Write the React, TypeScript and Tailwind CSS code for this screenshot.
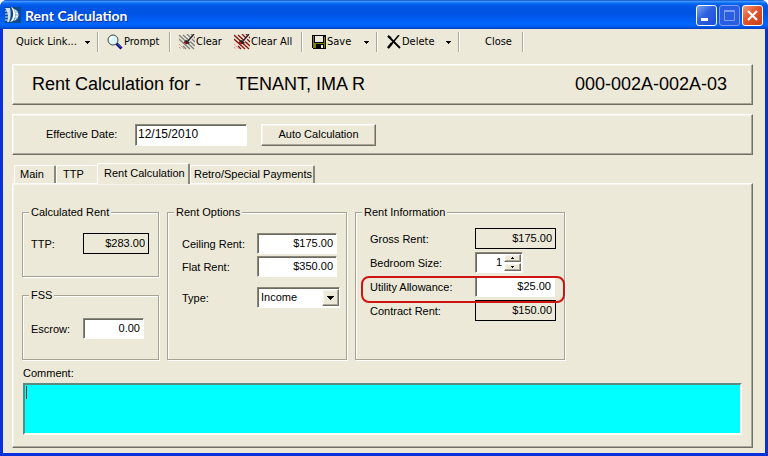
import React from "react";

const sunken =
  "border border-t-[#8a887a] border-l-[#8a887a] border-r-white border-b-white bg-white shadow-[inset_1px_1px_0_#6b6a5e] text-black outline-none";
const raisedPanel =
  "border border-t-white border-l-white border-r-[#716f64] border-b-[#716f64] shadow-[inset_-1px_-1px_0_#aca899,inset_1px_1px_0_#f6f4ea]";

function Separator() {
  return <span className="h-5 w-[2px] shrink-0 border-l border-l-[#aca899] bg-white" />;
}

function DownArrow() {
  return (
    <svg width="5" height="3" viewBox="0 0 5 3" shapeRendering="crispEdges" aria-hidden="true">
      <path d="M0 0h5v1h-1v1h-1v1h-1v-1h-1v-1h-1z" fill="#000" />
    </svg>
  );
}

function AppIcon() {
  return (
    <svg width="16" height="16" viewBox="0 0 16 16" aria-hidden="true">
      <rect width="16" height="16" fill="#0d4a8c" />
      <path d="M0 1h5c1 4 1 10-1 14H2C4 10 3 5 0 1z" fill="#cfe4f2" />
      <path d="M0 4h3M0 7h4M0 10h4M0 13h3" stroke="#cfe4f2" />
      <path d="M6 0c3 4 3 11-1 15l3-1c3-4 3-9 0-13z" fill="#fff" />
      <path d="M9 2c6 2 6 9 0 12 2-4 2-8 0-12z" fill="#e8f6ff" />
      <path d="M10 5h3M10 8h4M10 11h3" stroke="#7fa9cc" />
    </svg>
  );
}

function PromptIcon() {
  return (
    <svg width="16" height="16" viewBox="0 0 16 16" aria-hidden="true">
      <path d="M9.500 9.500l5 5" stroke="#000080" strokeWidth="3" />
      <path d="M10 9.500l4 4" stroke="#5c7fd8" strokeWidth="1" />
      <circle cx="6" cy="6" r="5" fill="#d9f6fa" stroke="#444" />
      <path d="M3 6c0-2 1-3 3-3" stroke="#fff" strokeWidth="1.500" fill="none" />
    </svg>
  );
}

function ClearIcon({ color }: { color: string }) {
  return (
    <svg width="16" height="16" viewBox="0 0 16 16" aria-hidden="true">
      <g stroke={color} strokeWidth="1.300" fill="none">
        <path d="M0 1l15 14M4 1l12 11M8 0l8 8M12 0l4 4M0 5l11 10M4 12l3 3" />
      </g>
      <path d="M0 10l5 5M0 13l2 2" stroke="#d98c8c" strokeDasharray="2 1" />
      <path d="M15 2l-6 7" stroke="#ddd" strokeWidth="1.500" />
      <path d="M15 0l-6 7" stroke="#222" strokeWidth="1.300" />
      <path d="M5 7l3-1 3 3-2 1z" fill="#222" />
      <path d="M5 8l3 2" stroke="#a00000" strokeWidth="1.500" />
    </svg>
  );
}

function SaveIcon() {
  return (
    <svg width="14" height="14" viewBox="0 0 14 14" shapeRendering="crispEdges" aria-hidden="true">
      <path d="M0 0h14v14h-13l-1-1z" fill="#000" />
      <path d="M1 1h1v12h-1zM12 2h1v11h-1zM2 8h10v1h-10zM2 9h2v4h-2z" fill="#808000" />
      <rect x="3" y="1" width="8" height="6" fill="#ece9d8" />
      <rect x="9" y="10" width="2" height="3" fill="#ece9d8" />
    </svg>
  );
}

function DeleteIcon() {
  return (
    <svg width="14" height="14" viewBox="0 0 14 14" aria-hidden="true">
      <path d="M1 1l4 4 8 8" stroke="#000" strokeWidth="1.800" fill="none" />
      <path d="M1 1l3 2" stroke="#000" strokeWidth="2" />
      <path d="M12 0L7 6 1 13" stroke="#000" strokeWidth="1.500" fill="none" />
      <path d="M5 8l-4 5" stroke="#000" strokeWidth="2.400" />
    </svg>
  );
}

function ToolButton({ icon, label, className = "" }: { icon?: React.ReactNode; label: string; className?: string }) {
  return (
    <button type="button" className={`flex h-5 items-center gap-px whitespace-nowrap ${className}`}>
      {icon}
      <span className="pb-[2px]">{label}</span>
    </button>
  );
}

function MenuArrow({ label, className }: { label: string; className: string }) {
  return (
    <button type="button" aria-label={label} className={`flex h-5 items-center ${className}`}>
      <DownArrow />
    </button>
  );
}

function Group({ title, className = "", children }: { title: string; className?: string; children: React.ReactNode }) {
  return (
    <fieldset
      className={`min-w-0 border border-[#a5a394] shadow-[1px_1px_0_#fff,inset_1px_1px_0_#fff] ${className}`}
    >
      <legend className="relative ml-[6px] bg-[#ece9d8] px-[2px] leading-[13px]">{title}</legend>
      {children}
    </fieldset>
  );
}

function Row({ id, label, labelWidth, children }: { id: string; label: string; labelWidth: string; children: React.ReactNode }) {
  return (
    <div className="flex h-[21px] items-start">
      <label htmlFor={id} className={`shrink-0 whitespace-nowrap pt-[5px] ${labelWidth}`}>
        {label}
      </label>
      {children}
    </div>
  );
}

function ReadOnly({ id, value, width }: { id: string; value: string; width: string }) {
  return (
    <input
      id={id}
      readOnly
      defaultValue={value}
      className={`h-[21px] border border-black bg-[#ece9d8] pr-[3px] pb-px text-right outline-none ${width}`}
    />
  );
}

function Amount({ id, value, width }: { id: string; value: string; width: string }) {
  return <input id={id} defaultValue={value} className={`h-[21px] pr-[3px] pb-px text-right ${sunken} ${width}`} />;
}

const tab =
  "border-t border-l border-white border-r-2 border-r-[#8a887a] bg-[#ece9d8] text-left rounded-t-[2px] whitespace-nowrap";

export default function App() {
  return (
    <div className="flex min-h-screen w-full flex-col overflow-hidden rounded-t-[7px] bg-[#0831d9] font-['Liberation_Sans',Arial,sans-serif] text-[11px] leading-[13px] text-black">
      <header className="flex h-[29px] items-center bg-[linear-gradient(to_bottom,#0a4fd0_0%,#3f95ff_5%,#0a6cf5_11%,#0058e6_20%,#0053e1_45%,#005cf5_65%,#0066ff_85%,#0057e8_93%,#003dc0_100%)] px-[5px]">
        <AppIcon />
        <h1 className="flex-1 pt-[2px] pl-1 font-['Lato','Noto_Sans',sans-serif] text-[14px] leading-5 font-bold text-white [text-shadow:1px_1px_0_#0a2f9c]">
          Rent Calculation
        </h1>
        <div className="flex gap-[2px] pt-[2px]">
          <button
            type="button"
            aria-label="Minimize"
            className="h-[21px] w-[21px] rounded-[3px] border border-white bg-[linear-gradient(135deg,#7ba2f0,#2c5fe0_45%,#1c4fd8)]"
          >
            <svg width="19" height="19" viewBox="0 0 19 19" aria-hidden="true">
              <rect x="4" y="12" width="7" height="3" fill="#fff" />
            </svg>
          </button>
          <button
            type="button"
            aria-label="Maximize"
            disabled
            className="h-[21px] w-[21px] rounded-[3px] border border-[#7f9df0] bg-[#2a5ee2]"
          >
            <svg width="19" height="19" viewBox="0 0 19 19" aria-hidden="true">
              <path d="M4.500 4.500h10v10h-10zM4 5.500h11" stroke="#7f9df0" fill="none" />
            </svg>
          </button>
          <button
            type="button"
            aria-label="Close window"
            className="h-[21px] w-[21px] rounded-[3px] border border-white bg-[linear-gradient(135deg,#f09a80,#e0532c_45%,#c8401c)]"
          >
            <svg width="19" height="19" viewBox="0 0 19 19" aria-hidden="true">
              <path d="M5 5l9 9M14 5l-9 9" stroke="#fff" strokeWidth="2.200" />
            </svg>
          </button>
        </div>
      </header>

      <main className="mx-[3px] mb-[3px] flex flex-1 flex-col bg-[#ece9d8] pr-3 pb-[5px] pl-[9px]">
        <div
          role="toolbar"
          className="flex h-[35px] items-start pt-[3px] font-['DejaVu_Sans_Condensed','DejaVu_Sans',sans-serif] text-[11px]"
        >
          <ToolButton label="Quick Link..." className="w-[73px] pl-1" />
          <MenuArrow label="Quick Link menu" className="w-[12px]" />
          <Separator />
          <ToolButton icon={<PromptIcon />} label="Prompt" className="w-[70px] pl-2" />
          <Separator />
          <ToolButton icon={<ClearIcon color="#808080" />} label="Clear" className="w-[55px] pl-2" />
          <ToolButton icon={<ClearIcon color="#8b1010" />} label="Clear All" className="w-[75px] pl-2" />
          <Separator />
          <ToolButton icon={<SaveIcon />} label="Save" className="w-[61px] pl-[9px]" />
          <MenuArrow label="Save menu" className="w-[12px]" />
          <Separator />
          <ToolButton icon={<DeleteIcon />} label="Delete" className="w-[68px] pl-[9px]" />
          <MenuArrow label="Delete menu" className="w-[12px]" />
          <Separator />
          <ToolButton label="Close" className="w-[62px] pl-[25px]" />
          <Separator />
        </div>

        <section className={`flex h-[41px] items-center pr-[25px] pl-[19px] text-[18px] leading-5 ${raisedPanel}`}>
          <h2 className="w-[204px] pb-[2px]">Rent Calculation for -</h2>
          <span className="flex-1 pb-[2px]">TENANT, IMA R</span>
          <span className="pb-[2px]">000-002A-002A-03</span>
        </section>

        <section className={`mt-[9px] flex h-[41px] items-center pl-[33px] ${raisedPanel}`}>
          <label htmlFor="effective" className="w-[89px]">
            Effective Date:
          </label>
          <input
            id="effective"
            defaultValue="12/15/2010"
            className={`h-[22px] w-[112px] pb-[2px] pl-[2px] text-[12px] ${sunken}`}
          />
          <button type="button" className={`ml-[14px] h-[22px] w-[115px] ${raisedPanel}`}>
            Auto Calculation
          </button>
        </section>

        <div role="tablist" className="mt-2 flex h-5 items-end pl-[2px]">
          <button type="button" role="tab" className={`h-[18px] w-[42px] pl-[5px] ${tab}`}>
            Main
          </button>
          <button type="button" role="tab" className="h-[18px] w-[41px] rounded-t-[2px] border-t border-l border-white pl-[6px] text-left">
            TTP
          </button>
          <button type="button" role="tab" aria-selected="true" className={`relative -mb-px h-[21px] w-[93px] pb-[2px] pl-[6px] ${tab}`}>
            Rent Calculation
          </button>
          <button type="button" role="tab" className={`h-[18px] w-[125px] pl-[3px] ${tab}`}>
            Retro/Special Payments
          </button>
        </div>

        <section className={`flex flex-1 flex-col px-[10px] pt-[22px] pb-3 ${raisedPanel}`}>
          <div className="-ml-px flex gap-2">
            <div className="flex w-[137px] flex-col gap-3">
              <Group title="Calculated Rent" className="h-[71px]">
                <div className="pt-[14px] pl-2">
                  <Row id="ttp" label="TTP:" labelWidth="w-[52px]">
                    <ReadOnly id="ttp" value="$283.00" width="w-[66px]" />
                  </Row>
                </div>
              </Group>
              <Group title="FSS" className="h-[71px]">
                <div className="pt-4 pl-2">
                  <Row id="escrow" label="Escrow:" labelWidth="w-[52px]">
                    <Amount id="escrow" value="0.00" width="w-[61px]" />
                  </Row>
                </div>
              </Group>
            </div>

            <Group title="Rent Options" className="w-[180px]">
              <div className="flex flex-col pt-[14px] pl-[14px]">
                <Row id="ceiling" label="Ceiling Rent:" labelWidth="w-[75px]">
                  <Amount id="ceiling" value="$175.00" width="w-[80px]" />
                </Row>
                <div className="pt-[2px] pb-[10px]">
                  <Row id="flat" label="Flat Rent:" labelWidth="w-[75px]">
                    <Amount id="flat" value="$350.00" width="w-[80px]" />
                  </Row>
                </div>
                <Row id="type" label="Type:" labelWidth="w-[75px]">
                  <div className="relative">
                    <select id="type" defaultValue="Income" className={`h-[21px] w-[83px] appearance-none pl-[3px] ${sunken}`}>
                      <option>Income</option>
                    </select>
                    <span
                      className={`pointer-events-none absolute top-[2px] right-px flex h-[17px] w-[17px] items-center justify-center bg-[#ece9d8] ${raisedPanel}`}
                    >
                      <svg width="7" height="4" viewBox="0 0 7 4" shapeRendering="crispEdges" aria-hidden="true">
                        <path d="M0 0h7v1h-1v1h-1v1h-1v1h-1v-1h-1v-1h-1v-1h-1z" fill="#000" />
                      </svg>
                    </span>
                  </div>
                </Row>
              </div>
            </Group>

            <Group title="Rent Information" className="w-[210px]">
              <div className="flex flex-col gap-[3px] pt-[9px] pl-[14px]">
                <Row id="gross" label="Gross Rent:" labelWidth="w-[105px]">
                  <ReadOnly id="gross" value="$175.00" width="w-[81px]" />
                </Row>
                <Row id="bedrooms" label="Bedroom Size:" labelWidth="w-[105px]">
                  <div className={`flex h-[21px] w-[48px] ${sunken}`}>
                    <input id="bedrooms" defaultValue="1" className="w-[28px] bg-transparent pr-[2px] pb-px text-right outline-none" />
                    <div className="flex w-[17px] flex-col gap-px pt-px">
                      <button type="button" aria-label="More bedrooms" className={`flex h-[8px] items-center justify-center bg-[#ece9d8] ${raisedPanel}`}>
                        <svg width="3" height="2" viewBox="0 0 3 2" shapeRendering="crispEdges" aria-hidden="true">
                          <path d="M1 0h1v1h1v1h-3v-1h1z" />
                        </svg>
                      </button>
                      <button type="button" aria-label="Fewer bedrooms" className={`flex h-[8px] items-center justify-center bg-[#ece9d8] ${raisedPanel}`}>
                        <svg width="3" height="2" viewBox="0 0 3 2" shapeRendering="crispEdges" aria-hidden="true">
                          <path d="M0 0h3v1h-1v1h-1v-1h-1z" />
                        </svg>
                      </button>
                    </div>
                  </div>
                </Row>
                <div className="relative">
                  <Row id="utility" label="Utility Allowance:" labelWidth="w-[105px]">
                    <Amount id="utility" value="$25.00" width="w-[80px]" />
                  </Row>
                  <span className="pointer-events-none absolute top-0 -right-px -left-[9px] h-[27px] rounded-[8px] border-2 border-[#d01414]" />
                </div>
                <Row id="contract" label="Contract Rent:" labelWidth="w-[105px]">
                  <ReadOnly id="contract" value="$150.00" width="w-[81px]" />
                </Row>
              </div>
            </Group>
          </div>

          <label htmlFor="comment" className="pt-[7px]">
            Comment:
          </label>
          <div className="relative mt-[3px] flex flex-1">
            <textarea
              id="comment"
              className="min-h-[51px] w-full resize-none border-2 border-t-[#5f8a84] border-r-white border-b-white border-l-[#5f8a84] bg-[#00ffff] outline-none"
            />
            <span className="absolute top-[3px] left-[3px] h-[13px] w-px bg-[#803030]" />
          </div>
        </section>
      </main>
    </div>
  );
}
